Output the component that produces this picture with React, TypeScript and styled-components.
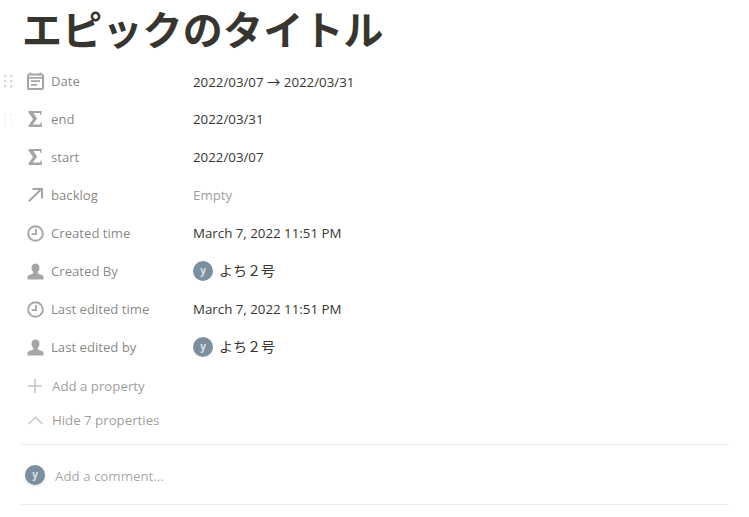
import React from "react";
import styled, { createGlobalStyle } from "styled-components";

const Global = createGlobalStyle`
  html, body { margin: 0; padding: 0; background: #fff; }
  body { font-family: "Open Sans", "Noto Sans CJK JP", sans-serif; }
`;

const Page = styled.div`
  width: 749px;
  height: 517px;
  box-sizing: border-box;
  padding: 0 20px 0 21px;
  overflow: hidden;
`;

const Title = styled.h1`
  margin: 0;
  height: 62px;
  padding-left: 1px;
  font-family: "Noto Sans CJK JP", sans-serif;
  font-size: 40px;
  letter-spacing: 0.2px;
  font-weight: 700;
  line-height: 57px;
  color: #37352f;
  white-space: nowrap;
`;

const Props = styled.div`
  display: flex;
  flex-direction: column;
`;

const Row = styled.div`
  position: relative;
  display: flex;
  align-items: center;
  height: 38px;
`;

const Grip = styled.svg<{ $opacity: number }>`
  position: absolute;
  left: -18px;
  top: 12px;
  opacity: ${(p) => p.$opacity};
`;

const Label = styled.div`
  display: flex;
  align-items: center;
  width: 172px;
  padding-left: 5px;
  box-sizing: border-box;
  gap: 7px;
  font-size: 13.15px;
  color: rgba(55, 53, 47, 0.62);
  white-space: nowrap;
`;

const IconBox = styled.span`
  display: flex;
  width: 18px;
  height: 18px;
  align-items: center;
  justify-content: center;
  flex: none;
`;

const Value = styled.div<{ $empty?: boolean }>`
  display: flex;
  align-items: center;
  gap: 6px;
  font-size: 13.3px;
  color: ${(p) => (p.$empty ? "rgba(55, 53, 47, 0.5)" : "#37352f")};
  white-space: nowrap;
`;

const Avatar = styled.span`
  display: flex;
  width: 20px;
  height: 20px;
  border-radius: 50%;
  background: #7b909e;
  color: rgba(255, 255, 255, 0.72);
  align-items: center;
  justify-content: center;
  font-size: 10px;
  font-weight: 700;
  line-height: 17px;
  padding-bottom: 1px;
  box-sizing: border-box;
  flex: none;
`;

const CommentAvatar = styled(Avatar)`
  box-shadow: 0 1px 3px rgba(15, 15, 15, 0.15);
`;

const Name = styled.span`
  font-family: "Noto Sans CJK JP", sans-serif;
  font-size: 14px;
  line-height: 20px;
  padding-bottom: 2px;
`;

const Action = styled.div`
  display: flex;
  align-items: center;
  height: 34px;
  padding-left: 5px;
  gap: 8px;
  font-size: 13.25px;
  color: rgba(55, 53, 47, 0.5);
`;

const Actions = styled.div`
  display: flex;
  flex-direction: column;
  margin-top: 3px;
`;

const Comment = styled.div`
  display: flex;
  align-items: center;
  height: 59px;
  margin-top: 7px;
  padding-left: 4px;
  gap: 10px;
  border-top: 1px solid #ededec;
  border-bottom: 1px solid #ededec;
  font-size: 13.3px;
  color: rgba(55, 53, 47, 0.45);
`;

const CommentText = styled.span`
  padding-top: 2px;
`;

const iconColor = "#a5a5a2";

const GripDots = ({ opacity }: { opacity: number }) => (
  <Grip $opacity={opacity} width="10" height="15" viewBox="0 0 10 15">
    {[1, 6, 11].map((y) =>
      [1, 7].map((x) => <rect key={`${x}-${y}`} x={x} y={y} width="2.4" height="2.4" fill="#d9d9d7" />)
    )}
  </Grip>
);

const CalendarIcon = () => (
  <svg width="17" height="18" viewBox="0 0 17 18">
    <path d="M3.5 .5v2.500M13.500 .5v2.500" stroke={iconColor} strokeWidth="1.8" />
    <rect x="1" y="2.600" width="15" height="14.400" rx="1.600" fill="none" stroke={iconColor} strokeWidth="2" />
    <path d="M1 5.800h15" stroke={iconColor} strokeWidth="1.800" />
    <path d="M4 9.200h9M4 12.800h6" stroke={iconColor} strokeWidth="1.700" />
  </svg>
);

const SigmaIcon = () => (
  <svg width="14" height="16" viewBox="0 0 14 16">
    <path d="M.5 0h13v4h-1l-.6-2H5.500l3.600 5.800L4.700 13.600h7.400l.7-2h1V16H.5v-1.600L5 8.100.5 1.600z" fill={iconColor} />
  </svg>
);

const ArrowIcon = () => (
  <svg width="15" height="14" viewBox="0 0 15 14">
    <path d="M.8 13.200 13.500 1M4.500 1H14v9.500" fill="none" stroke={iconColor} strokeWidth="2" />
  </svg>
);

const ClockIcon = () => (
  <svg width="17" height="17" viewBox="0 0 17 17">
    <circle cx="8.500" cy="8.500" r="7.300" fill="none" stroke={iconColor} strokeWidth="1.900" />
    <path d="M9 4v5.200H4.600" fill="none" stroke={iconColor} strokeWidth="1.800" />
  </svg>
);

const PersonIcon = () => (
  <svg width="17" height="17" viewBox="0 0 17 17">
    <path
      d="M8.500.5c2.400 0 4 1.900 4 4.300 0 1.800-.8 3.300-1.800 4.100v.9c0 .7 1 1.100 2.500 1.600 2.200.7 3.300 1.300 3.300 2.400v2.700H.5v-2.700c0-1.100 1.100-1.700 3.300-2.400 1.500-.5 2.500-.9 2.500-1.600v-.9C5.300 8.100 4.500 6.600 4.500 4.800 4.500 2.400 6.100.5 8.500.5z"
      fill={iconColor}
    />
  </svg>
);

const PlusIcon = () => (
  <svg width="14" height="14" viewBox="0 0 14 14">
    <path d="M7 0v14M0 7h14" stroke="#c4c4c2" strokeWidth="1.500" />
  </svg>
);

const ChevronUpIcon = () => (
  <svg width="15" height="9" viewBox="0 0 15 9">
    <path d="M.6 8 7.500 1.300 14.400 8" fill="none" stroke="#c4c4c2" strokeWidth="1.400" />
  </svg>
);

type Prop = {
  label: string;
  icon: React.ReactNode;
  value: React.ReactNode;
  empty?: boolean;
  grip?: number;
};

const User = () => (
  <>
    <Avatar>y</Avatar>
    <Name>よち２号</Name>
  </>
);

const props: Prop[] = [
  { label: "Date", icon: <CalendarIcon />, value: "2022/03/07 → 2022/03/31", grip: 1 },
  { label: "end", icon: <SigmaIcon />, value: "2022/03/31", grip: 0.25 },
  { label: "start", icon: <SigmaIcon />, value: "2022/03/07" },
  { label: "backlog", icon: <ArrowIcon />, value: "Empty", empty: true },
  { label: "Created time", icon: <ClockIcon />, value: "March 7, 2022 11:51 PM" },
  { label: "Created By", icon: <PersonIcon />, value: <User /> },
  { label: "Last edited time", icon: <ClockIcon />, value: "March 7, 2022 11:51 PM" },
  { label: "Last edited by", icon: <PersonIcon />, value: <User /> },
];

export default function App() {
  return (
    <Page>
      <Global />
      <Title>エピックのタイトル</Title>
      <Props>
        {props.map((p) => (
          <Row key={p.label}>
            {p.grip ? <GripDots opacity={p.grip} /> : null}
            <Label>
              <IconBox>{p.icon}</IconBox>
              {p.label}
            </Label>
            <Value $empty={p.empty}>{p.value}</Value>
          </Row>
        ))}
      </Props>
      <Actions>
        <Action>
          <IconBox>
            <PlusIcon />
          </IconBox>
          Add a property
        </Action>
        <Action>
          <IconBox>
            <ChevronUpIcon />
          </IconBox>
          Hide 7 properties
        </Action>
      </Actions>
      <Comment>
        <CommentAvatar>y</CommentAvatar>
        <CommentText>Add a comment...</CommentText>
      </Comment>
    </Page>
  );
}
